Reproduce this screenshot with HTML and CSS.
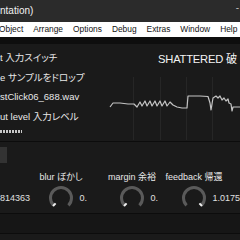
FILE: index.html
```html
<!DOCTYPE html>
<html lang="ja">
<head>
    <meta charset="UTF-8">
    <title>SHATTERED</title>
    <link rel="stylesheet" href="styles.css">
</head>
<body>
    <div class="titlebar">ntation)<span class="winbtn">-</span></div>
    <nav class="menubar">
        <span>Object</span>
        <span>Arrange</span>
        <span>Options</span>
        <span>Debug</span>
        <span>Extras</span>
        <span>Window</span>
        <span>Help</span>
    </nav>

    <main class="patch">
        <div class="strip"></div>

        <section class="upper">
            <div class="inputs">
                <div class="row">t 入力スイッチ</div>
                <div class="row">e サンプルをドロップ</div>
                <div class="row">stClick06_688.wav</div>
                <div class="row">ut level 入力レベル</div>
                <div class="meter"></div>
            </div>
            <div class="scope">
                <div class="scope-title">SHATTERED 破</div>
                <svg class="wave" viewBox="105 68 135 73" width="135" height="73">
                    <g stroke="#262626" stroke-width="1">
                        <line x1="133.5" y1="78" x2="133.5" y2="141"/>
                        <line x1="160.5" y1="78" x2="160.5" y2="141"/>
                        <line x1="186.5" y1="78" x2="186.5" y2="141"/>
                        <line x1="212.5" y1="78" x2="212.5" y2="141"/>
                    </g>
                    <polyline fill="none" stroke="#c4c4c4" stroke-width="1.2" stroke-linejoin="round"
                        points="110,108 113,104 120,104 128,105 134,105 137,108 140,103 142,107 145,102 147,107 150,102 152,107 155,102 157,107 160,102 162,107 165,102 167,107 170,103 173,106 177,108 182,109 187,109 188,97 200,97 208,97.5 210,104 211,111 213,99 216,97 218,99 220,97 222,101 224,99 226,102 228,100 229,104 231,105 232,112 233,108 240,108"/>
                </svg>
            </div>
        </section>

        <section class="lower">
            <div class="btn"></div>
            <div class="controls">
                <div></div>
                <div class="lab"><span>blur ぼかし</span></div>
                <div class="lab"><span>margin 余裕</span></div>
                <div class="lab"><span>feedback 帰還</span></div>

                <div class="val">814363</div>
                <div class="ctrl">
                    <svg class="knob" viewBox="0 0 26 26" width="26" height="26">
                        <path d="M5.58 20.42 A10.5 10.5 0 1 1 20.42 20.42" fill="none" stroke="#5a5a5a" stroke-width="3"/>
                        <line x1="7.6" y1="18.4" x2="5" y2="21" stroke="#f0f0f0" stroke-width="2"/>
                    </svg>
                    <span class="val">0.</span>
                </div>
                <div class="ctrl">
                    <svg class="knob" viewBox="0 0 26 26" width="26" height="26">
                        <path d="M5.58 20.42 A10.5 10.5 0 1 1 20.42 20.42" fill="none" stroke="#5a5a5a" stroke-width="3"/>
                        <line x1="7.6" y1="18.4" x2="5" y2="21" stroke="#f0f0f0" stroke-width="2"/>
                    </svg>
                    <span class="val">0.</span>
                </div>
                <div class="ctrl">
                    <svg class="knob" viewBox="0 0 26 26" width="26" height="26">
                        <path d="M5.58 20.42 A10.5 10.5 0 1 1 20.42 20.42" fill="none" stroke="#5a5a5a" stroke-width="3"/>
                        <line x1="18.4" y1="18.4" x2="21" y2="21" stroke="#f0f0f0" stroke-width="2"/>
                    </svg>
                    <span class="val">1.0175</span>
                </div>
            </div>
        </section>

        <div class="band"></div>
    </main>
</body>
</html>
```

FILE: styles.css
```css
/* ウィンドウ全体 */
body {
    margin: 0;
    width: 240px;
    height: 240px;
    overflow: hidden;
    background: #1a1a1a;
    font-family: "Liberation Sans", "Noto Sans CJK JP", sans-serif;
    font-feature-settings: "palt";
    color: #e8e8e8;
}

.titlebar {
    position: relative;
    height: 22px;
    line-height: 22px;
    background: #2b2b2b;
    color: #f2f2f2;
    font-size: 10px;
    white-space: nowrap;
}

.winbtn {
    position: absolute;
    right: 1px;
    top: -3px;
    color: #bbb;
}

.menubar {
    display: flex;
    gap: 10px;
    height: 15px;
    line-height: 15px;
    margin-left: -1px;
    background: #ffffff;
    color: #111;
    font-size: 8.4px;
    white-space: nowrap;
}

.strip {
    height: 7px;
    background: #0e0e0e;
}

/* 上段：入力と波形 */
.upper {
    display: flex;
    height: 97px;
    border-bottom: 1px solid #0c0c0c;
}

.inputs {
    width: 105px;
    padding-top: 4px;
    font-size: 9.5px;
    white-space: nowrap;
}

.row {
    height: 19.5px;
    line-height: 19.5px;
}

.meter {
    width: 22px;
    height: 3px;
    margin-top: 4px;
    background: repeating-linear-gradient(90deg, #c8c8c8 0 2px, #1a1a1a 2px 3px);
}

.scope {
    flex: 1;
    position: relative;
}

.scope-title {
    position: absolute;
    left: 53px;
    top: 6px;
    font-size: 11.2px;
    letter-spacing: -0.2px;
    color: #f4f4f4;
    white-space: nowrap;
}

.wave {
    display: block;
    margin-top: 23px;
}

/* 下段：ノブ */
.lower {
    height: 72px;
    padding-top: 5px;
    box-sizing: border-box;
    border-bottom: 1px solid #0c0c0c;
}

.btn {
    width: 7px;
    height: 16px;
    background: #333;
}

.controls {
    display: grid;
    grid-template-columns: 48px 71px 62px 1fr;
    grid-template-rows: 12px 26px;
    row-gap: 2px;
    margin-top: 8px;
    font-size: 9px;
    white-space: nowrap;
}

.lab {
    width: 26px;
    display: flex;
    justify-content: center;
    line-height: 12px;
}

.ctrl {
    display: flex;
    align-items: center;
    gap: 5.5px;
}

.val {
    align-self: center;
    color: #e0e0e0;
}

.knob {
    display: block;
}

.band {
    height: 19px;
    background: #161616;
    border-bottom: 1px solid #0c0c0c;
}
```
